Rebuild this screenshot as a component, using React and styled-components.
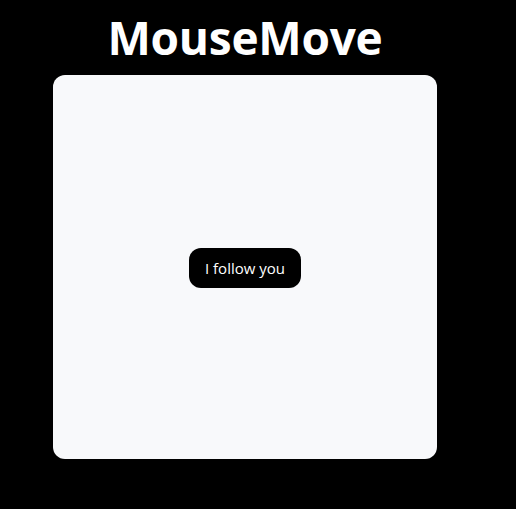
import React from "react";
import styled, { createGlobalStyle } from "styled-components";

const Global = createGlobalStyle`
  html, body {
    margin: 0;
    background: #000;
    font-family: "Open Sans", "Noto Sans", sans-serif;
  }
`;

const Page = styled.div`
  display: flex;
  flex-direction: column;
  align-items: center;
  width: 384px;
  margin-left: 53px;
`;

const Title = styled.h1`
  margin: 6px 0 0;
  height: 69px;
  font-size: 46px;
  line-height: 62px;
  font-weight: 700;
  color: #fff;
  letter-spacing: -0.25px;
`;

const Area = styled.div`
  width: 384px;
  height: 384px;
  border-radius: 12px;
  background: #f8f9fb;
  display: flex;
  align-items: center;
  justify-content: center;
`;

const Follower = styled.div`
  width: 112px;
  height: 40px;
  border-radius: 12px;
  background: #000;
  color: #fff;
  font-size: 15px;
  display: flex;
  align-items: center;
  justify-content: center;
  margin-top: 2px;
`;

export default function App() {
  return (
    <>
      <Global />
      <Page>
        <Title>MouseMove</Title>
        <Area>
          <Follower>I follow you</Follower>
        </Area>
      </Page>
    </>
  );
}
